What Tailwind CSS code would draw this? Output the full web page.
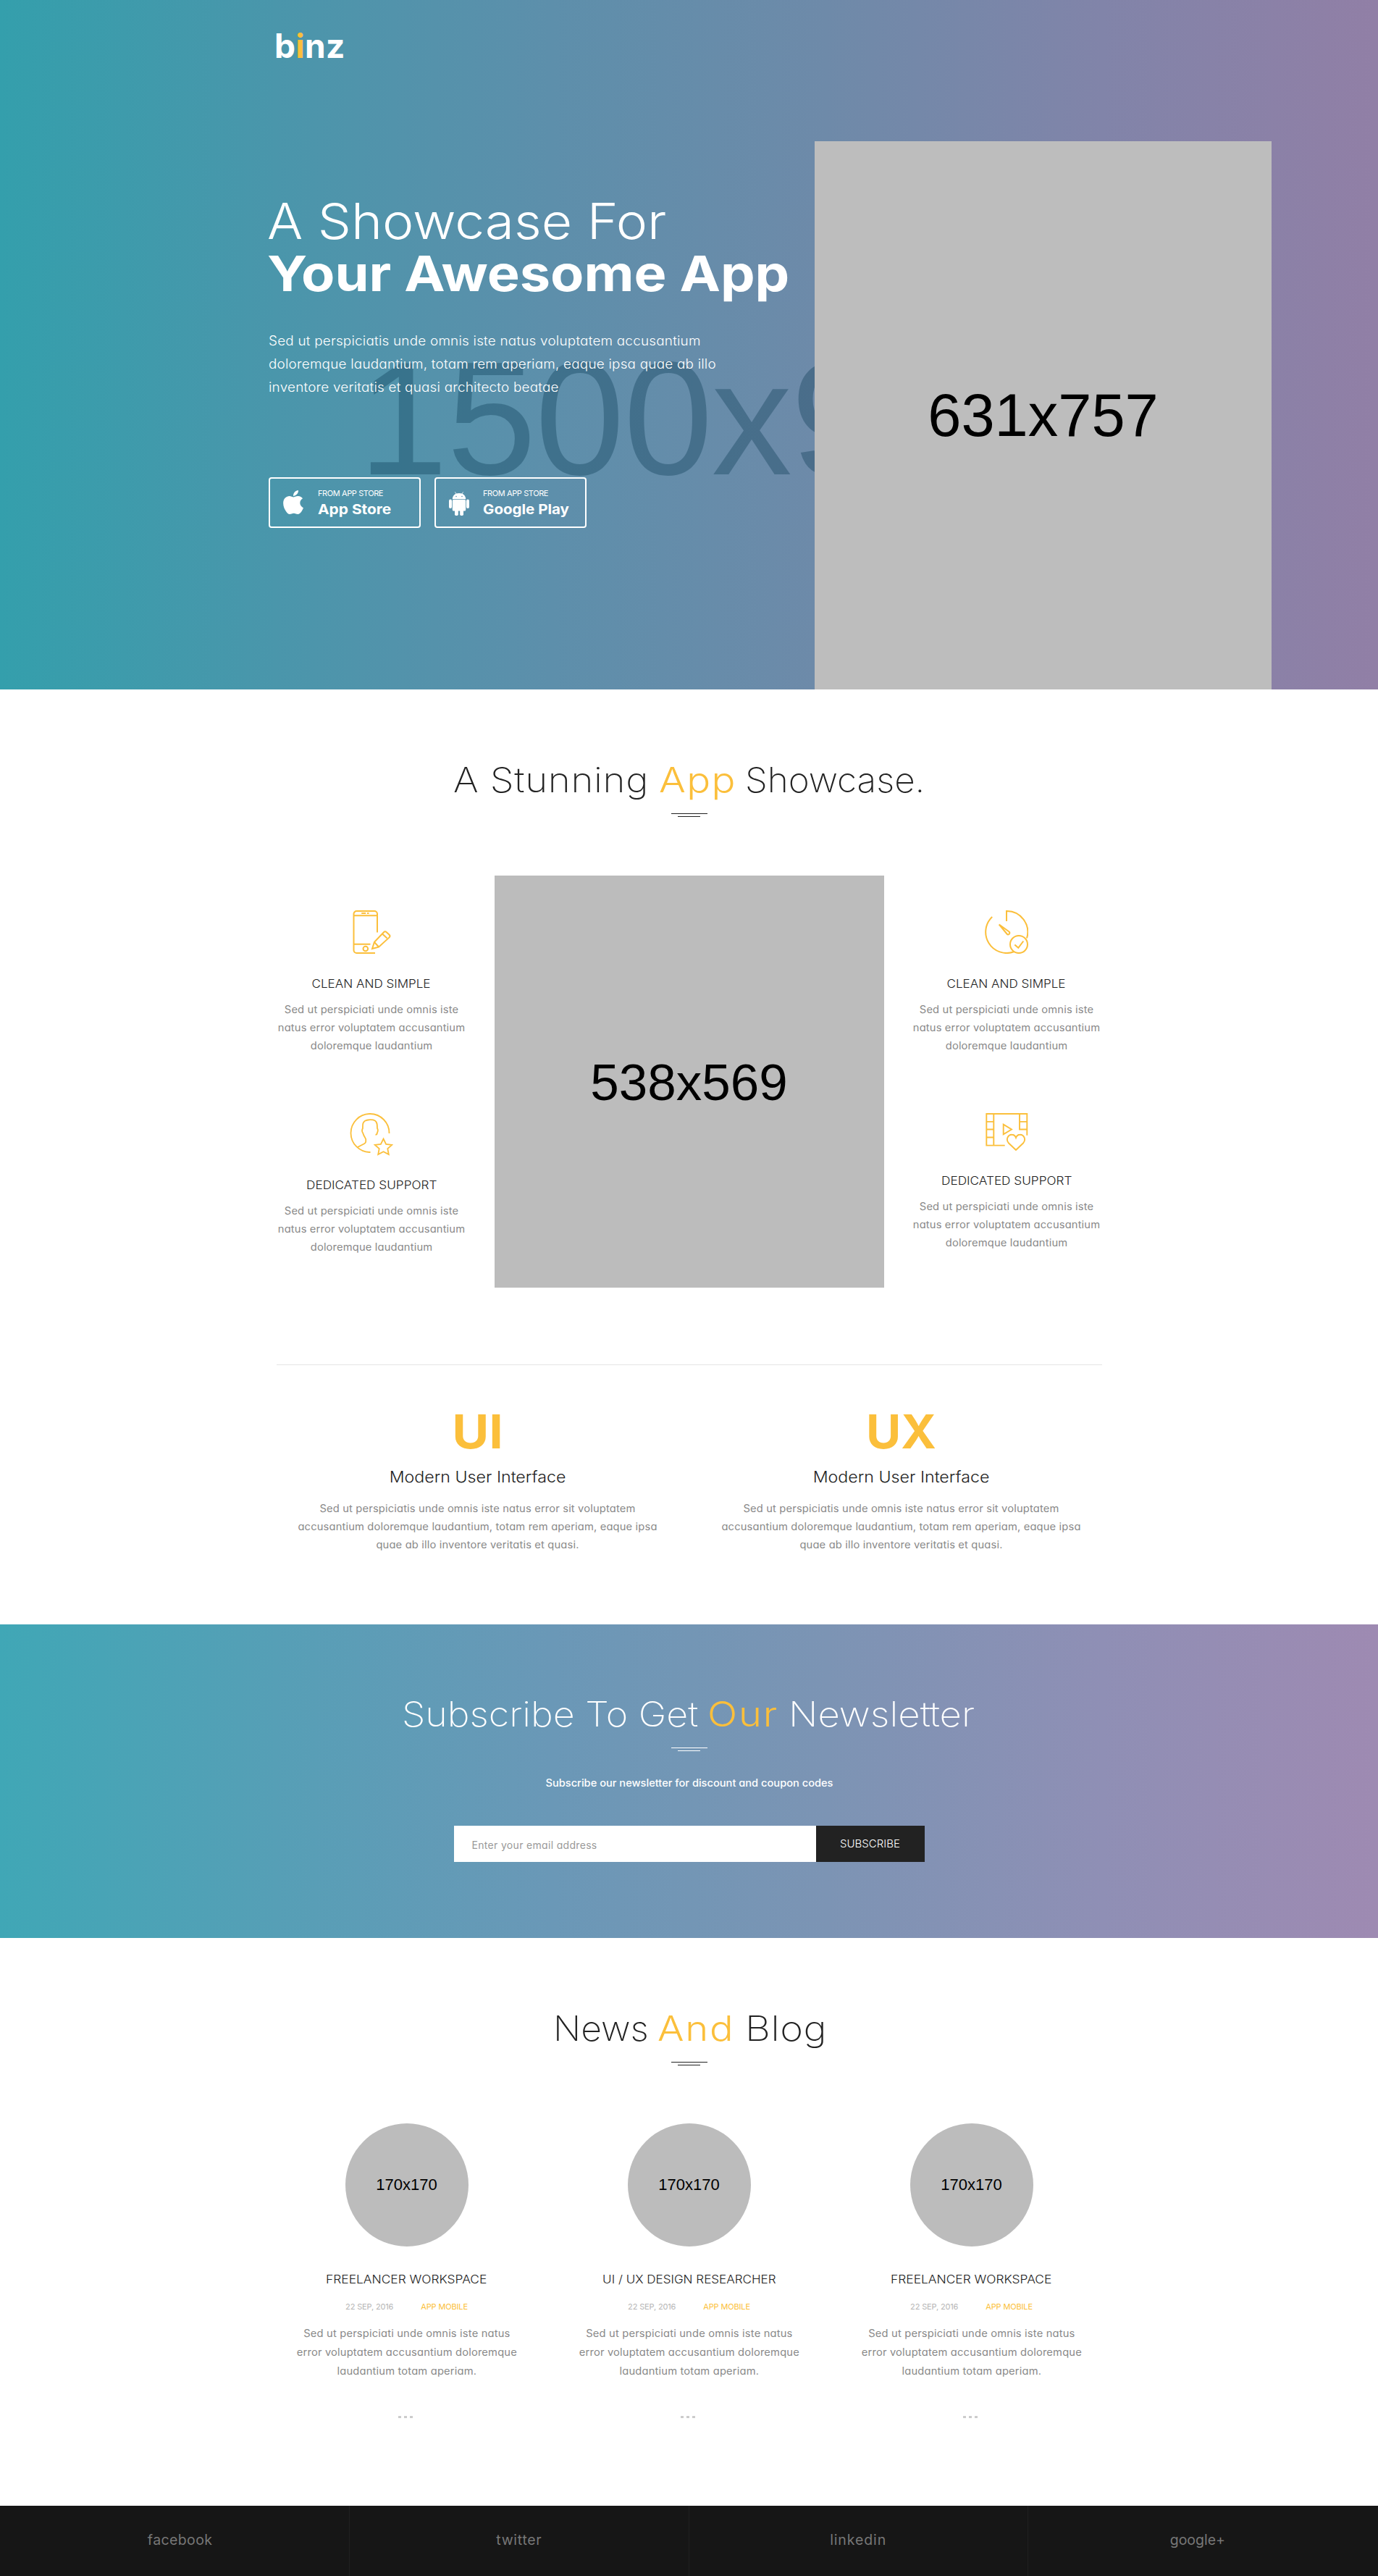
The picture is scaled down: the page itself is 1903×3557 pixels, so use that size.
<!DOCTYPE html>
<html lang="en">
<head>
<meta charset="utf-8">
<title>binz</title>
<script src="https://cdn.jsdelivr.net/npm/@tailwindcss/browser@4"></script>
</head>
<body class="bg-white font-['Inter',sans-serif] text-[#222] overflow-x-hidden">

<!-- Hero -->
<section class="relative flex h-[952px] overflow-hidden pl-[372px] bg-[linear-gradient(90deg,#349fac_0%,#4a96ab_20%,#5d8fab_40%,#6e8aa9_60%,#8184a9_80%,#917fa6_100%)]">
  <div class="absolute left-[495px] top-[466px] text-[222px] leading-[224px] tracking-[-1.5px] whitespace-nowrap font-['Liberation_Sans',sans-serif] text-[rgba(0,50,75,0.32)]">1500x900</div>
  <div class="relative w-[753px] shrink-0 text-white">
    <div class="mt-10 ml-[7px] text-[46px] leading-[46px] font-bold tracking-[0.3px]">b<span class="text-[#fbbf3b]">i</span>nz</div>
    <h1 class="mt-[183px] -ml-[3px] text-[68px] leading-[72px] whitespace-nowrap"><span class="block w-fit origin-left scale-x-[1.075] font-light">A Showcase For</span><span class="block w-fit origin-left scale-x-[1.112] font-bold">Your Awesome App</span></h1>
    <p class="mt-[42px] -ml-px w-fit origin-left scale-x-[1.05] text-[18px] leading-8 font-light tracking-[0.2px] whitespace-nowrap [font-feature-settings:'cv11']">Sed ut perspiciatis unde omnis iste natus voluptatem accusantium<br>doloremque laudantium, totam rem aperiam, eaque ipsa quae ab illo<br>inventore veritatis et quasi architecto beatae</p>
    <div class="mt-[108px] -ml-px flex gap-[19px]">
      <a class="flex h-[70px] w-[210px] items-center rounded-[4px] border-2 border-white pl-[18px]">
        <svg class="h-[33px] w-7 -mt-px" viewBox="4 32 376 448" fill="currentColor"><path d="M318.7 268.7c-.2-36.7 16.4-64.4 50-84.8-18.8-26.9-47.2-41.7-84.7-44.6-35.5-2.8-74.3 20.7-88.5 20.7-15 0-49.4-19.7-76.4-19.7C63.3 141.2 4 184.8 4 273.5q0 39.3 14.4 81.2c12.8 36.7 59 126.7 107.2 125.2 25.2-.6 43-17.9 75.8-17.9 31.8 0 48.3 17.9 76.4 17.9 48.6-.7 90.4-82.5 102.6-119.3-65.2-30.7-61.7-90-61.7-91.9zm-56.6-164.2c27.3-32.4 24.8-61.9 24-72.5-24.1 1.4-52 16.4-67.9 34.9-17.5 19.8-27.8 44.3-25.6 71.9 26.1 2 49.9-11.4 69.5-34.3z"/></svg>
        <span class="ml-5 whitespace-nowrap"><span class="mt-px block text-[11px] leading-4 tracking-[-0.4px]">FROM APP STORE</span><span class="mt-[3px] block w-fit origin-left scale-x-[1.1] text-[19px] leading-6 font-bold">App Store</span></span>
      </a>
      <a class="flex h-[70px] w-[210px] items-center rounded-[4px] border-2 border-white pl-[18px]">
        <svg class="h-[33px] w-7 mt-[3px]" viewBox="0 0 28 33" fill="currentColor"><path d="M4.8 10.2C4.8 5.500 8.500 2 14 2s9.200 3.500 9.200 8.200z"/><path d="M8.300.3l2 3M19.700.3l-2 3" stroke="currentColor" stroke-width=".8"/><rect x="4.800" y="11" width="18.400" height="15.500" rx="1.500"/><rect x="0" y="10.500" width="4" height="12.500" rx="2"/><rect x="24" y="10.500" width="4" height="12.500" rx="2"/><rect x="8" y="24" width="4.800" height="9" rx="1.800"/><rect x="15.200" y="24" width="4.800" height="9" rx="1.800"/><circle cx="10" cy="6.500" r=".8" fill="#5a91ab"/><circle cx="18" cy="6.500" r=".8" fill="#5a91ab"/></svg>
        <span class="ml-[19px] whitespace-nowrap"><span class="mt-px block text-[11px] leading-4 tracking-[-0.4px]">FROM APP STORE</span><span class="mt-[3px] block w-fit origin-left scale-x-[1.08] text-[19px] leading-6 font-bold">Google Play</span></span>
      </a>
    </div>
  </div>
  <div class="relative mt-[195px] flex h-[757px] w-[631px] shrink-0 justify-center bg-[#bdbdbd] pt-[337px] font-['Liberation_Sans',sans-serif] text-[83px] leading-[84px] text-black">631x757</div>
</section>

<!-- Features -->
<section class="flex h-[1291px] flex-col items-center pt-[101px]">
  <h2 class="flex w-[651px] whitespace-nowrap text-[48px] leading-[48px] font-extralight"><span class="w-[284px] origin-left scale-x-[1.1] tracking-[0.6px]">A Stunning</span><span class="w-[119px] origin-left scale-x-[1.14] font-[330] tracking-[1.2px] text-[#fbbf3b]">App</span><span class="w-[248px] origin-left scale-x-[1.03]">Showcase.</span></h2>
  <div class="mt-[22px] h-px w-[50px] bg-[#222]"></div>
  <div class="mt-[3px] h-px w-[31px] bg-[#222]"></div>
  <div class="mt-[81px] flex w-[1140px] text-center">
    <div class="ml-px flex w-[261px] flex-col items-center pt-12">
      <svg class="size-[60px]" viewBox="0 0 60 60" fill="none" stroke="#fbbf3b" stroke-width="2"><path d="M38 30.500V5a4 4 0 0 0-4-4H9.500a4 4 0 0 0-4 4v50a4 4 0 0 0 4 4H35M5.500 7.300H38M5.500 46.800h23"/><path d="M16.200 4h6M24 4h2.500" stroke-width="2.200"/><circle cx="21.800" cy="53" r="3.300"/><path d="M31 53l3-9.300L47 30.200q1.800-1.800 3.800 0l3.800 3.500q1.800 1.800 0 3.700L40 50.700zM45 32.500l6.500 6M34 44l6 6.500"/></svg>
      <h3 class="mt-8 scale-x-[1.1] text-[15.5px] leading-5 font-[350]">CLEAN AND SIMPLE</h3>
      <p class="mt-3 scale-x-[1.05] whitespace-nowrap text-[14px] leading-[25px] tracking-[0.15px] text-[#888] [font-feature-settings:'cv11']">Sed ut perspiciati unde omnis iste<br>natus error voluptatem accusantium<br>doloremque laudantium</p>
      <svg class="mt-[81px] size-[60px]" viewBox="0 0 60 60" fill="none" stroke="#fbbf3b" stroke-width="1.800"><path d="M54.500 28A26.500 26.500 0 1 0 28.500 54"/><path d="M10.500 47.300l10-5.300q2-1.200 1.700-3.500v-2.500c-1-2.500-3-4.500-4-8.500-1.200-1.500-1.300-4.500-.3-6.500 0-5-.2-8 3-10.200C25 8.700 32 8.700 35 10.500c3 2 3 5.500 3 10.500 1.300 2 .6 5-.2 6.500 0 1.500-.6 2.300-2.300 2.300"/><path d="M46.500 35.500l3.600 7.400 8.200 1-6 5.300 1.500 7.800-7.300-3.700-7.300 3.700 1.500-7.800-6-5.300 8.200-1z"/></svg>
      <h3 class="mt-[30px] scale-x-[1.11] text-[15.5px] leading-5 font-[350]">DEDICATED SUPPORT</h3>
      <p class="mt-3 scale-x-[1.05] whitespace-nowrap text-[14px] leading-[25px] tracking-[0.15px] text-[#888] [font-feature-settings:'cv11']">Sed ut perspiciati unde omnis iste<br>natus error voluptatem accusantium<br>doloremque laudantium</p>
    </div>
    <div class="ml-[39px] flex h-[569px] w-[538px] justify-center bg-[#bcbcbc] pt-[250px] font-['Liberation_Sans',sans-serif] text-[71px] leading-[72px] text-black">538x569</div>
    <div class="ml-[39px] flex w-[261px] flex-col items-center pt-12">
      <svg class="size-[60px]" viewBox="0 0 60 60" fill="none" stroke="#fbbf3b" stroke-width="2"><path d="M30 15V1a29 29 0 0 1 28 37.500M40 57.300A29 29 0 0 1 10.200 9"/><path d="M19.700 19.500l13.800 10q1.600 1.500.2 3.200-1.700 1.500-3.200-.2z"/><circle cx="47" cy="47" r="12"/><path d="M41.300 47.400l5 4.400 7-9.300"/></svg>
      <h3 class="mt-8 scale-x-[1.1] text-[15.5px] leading-5 font-[350]">CLEAN AND SIMPLE</h3>
      <p class="mt-3 scale-x-[1.05] whitespace-nowrap text-[14px] leading-[25px] tracking-[0.15px] text-[#888] [font-feature-settings:'cv11']">Sed ut perspiciati unde omnis iste<br>natus error voluptatem accusantium<br>doloremque laudantium</p>
      <svg class="mt-[81px] h-[52px] w-[60px]" viewBox="0 0 60 52" fill="none" stroke="#fbbf3b" stroke-width="1.900"><path d="M27.700 44.600H2.300V1h56v29.800M12.300 1v43.600M2.300 11.900h10M2.300 22.500h10M2.300 33.500h10M48 1v21.500h10.300M48 11.900h10.300M25.700 15.600l11.300 6.900-11.300 6.900z"/><path d="M43 51L33 41.500c-4.500-5-1-12 4.500-11.800 2.500 0 4.500 1.600 5.500 4.300 1-2.700 3-4.300 5.500-4.300 5.500-.2 9 6.800 4.500 11.800z"/></svg>
      <h3 class="mt-8 scale-x-[1.11] text-[15.5px] leading-5 font-[350]">DEDICATED SUPPORT</h3>
      <p class="mt-3 scale-x-[1.05] whitespace-nowrap text-[14px] leading-[25px] tracking-[0.15px] text-[#888] [font-feature-settings:'cv11']">Sed ut perspiciati unde omnis iste<br>natus error voluptatem accusantium<br>doloremque laudantium</p>
    </div>
  </div>
  <div class="mt-[106px] h-px w-[1140px] bg-[#e5e5e5]"></div>
  <div class="mt-[60px] grid w-[1170px] grid-cols-2 text-center">
    <div>
      <div class="scale-x-[1.09] text-[64px] leading-[64px] font-bold text-[#fbbf3b]">UI</div>
      <h3 class="mt-4 scale-x-[1.055] text-[22px] leading-7 font-[350]">Modern User Interface</h3>
      <p class="mt-[17px] scale-x-[1.05] text-[14px] leading-[25px] tracking-[0.15px] whitespace-nowrap text-[#888] [font-feature-settings:'cv11']">Sed ut perspiciatis unde omnis iste natus error sit voluptatem<br>accusantium doloremque laudantium, totam rem aperiam, eaque ipsa<br>quae ab illo inventore veritatis et quasi.</p>
    </div>
    <div>
      <div class="scale-x-[1.03] text-[64px] leading-[64px] font-bold text-[#fbbf3b]">UX</div>
      <h3 class="mt-4 scale-x-[1.055] text-[22px] leading-7 font-[350]">Modern User Interface</h3>
      <p class="mt-[17px] scale-x-[1.05] text-[14px] leading-[25px] tracking-[0.15px] whitespace-nowrap text-[#888] [font-feature-settings:'cv11']">Sed ut perspiciatis unde omnis iste natus error sit voluptatem<br>accusantium doloremque laudantium, totam rem aperiam, eaque ipsa<br>quae ab illo inventore veritatis et quasi.</p>
    </div>
  </div>
</section>

<!-- Newsletter -->
<section class="flex h-[433px] flex-col items-center pt-[100px] text-white bg-[linear-gradient(90deg,#40a7b6_0%,#569fb6_20%,#6a98b7_40%,#7396b5_50%,#7c94b4_60%,#8f8fb5_80%,#9e8ab2_100%)]">
  <h2 class="flex w-[793px] whitespace-nowrap text-[48px] leading-[48px] font-extralight"><span class="w-[422px] origin-left scale-x-[1.083]">Subscribe To Get</span><span class="w-[112px] origin-left scale-x-[1.13] font-[330] tracking-[1.6px] text-[#fbbf3b]">Our</span><span class="w-[259px] origin-left scale-x-[1.1]">Newsletter</span></h2>
  <div class="mt-[22px] h-px w-[50px] bg-white"></div>
  <div class="mt-[3px] h-px w-[31px] bg-white"></div>
  <p class="mt-[31px] scale-x-[1.045] text-[14px] leading-[25px] font-medium [font-feature-settings:'cv11']">Subscribe our newsletter for discount and coupon codes</p>
  <form class="mt-[47px] flex h-[50px]">
    <input type="email" placeholder="Enter your email address" class="w-[500px] bg-white px-[25px] pt-0.5 text-[14px] tracking-[0.32px] placeholder:text-[#999] [font-feature-settings:'cv11']">
    <button type="button" class="w-[150px] bg-[#222] text-[15px] leading-5 font-[350]">SUBSCRIBE</button>
  </form>
</section>

<!-- Blog -->
<section class="flex h-[784px] flex-col items-center pt-[101px]">
  <h2 class="flex w-[376px] whitespace-nowrap text-[48px] leading-[48px] font-extralight"><span class="w-[144px] origin-left scale-x-[1.04]">News</span><span class="w-[121px] origin-left scale-x-[1.13] font-[330] tracking-[1.6px] text-[#fbbf3b]">And</span><span class="w-[111px] origin-left scale-x-[1.13] tracking-[0.5px]">Blog</span></h2>
  <div class="mt-[22px] h-px w-[50px] bg-[#222]"></div>
  <div class="mt-[3px] h-px w-[31px] bg-[#222]"></div>
  <div class="mt-20 grid w-[1170px] grid-cols-3 text-center" id="posts"></div>
</section>

<!-- Footer -->
<footer class="grid h-[97px] grid-cols-4 bg-[#161616] px-[15px] text-center text-[19.5px] leading-7 text-[#777]">
  <a class="border-r border-[#202020] pt-[33px] tracking-[0.4px]">facebook</a>
  <a class="border-r border-[#202020] pt-[33px] tracking-[0.7px]">twitter</a>
  <a class="border-r border-[#202020] pt-[33px] tracking-[0.9px]">linkedin</a>
  <a class="pt-[33px]">google+</a>
</footer>

<script>
  const posts = [
    ['FREELANCER WORKSPACE', 'scale-x-[1.12]'],
    ['UI / UX DESIGN RESEARCHER', 'scale-x-[1.1]'],
    ['FREELANCER WORKSPACE', 'scale-x-[1.12]'],
  ];
  document.getElementById('posts').innerHTML = posts.map(([title, stretch]) => `
    <article class="flex flex-col items-center">
      <div class="size-[170px] rounded-full bg-[#bcbcbc] font-['Liberation_Sans',sans-serif] text-[22px] leading-[170px] text-black">170x170</div>
      <h3 class="mt-9 text-[15.5px] leading-5 font-[350] ${stretch}">${title}</h3>
      <div class="mt-[19px] flex gap-[38px] text-[11px] leading-4 tracking-[-0.15px]"><span class="text-[#b5b5b5]">22 SEP, 2016</span><span class="text-[#fbbf3b]">APP MOBILE</span></div>
      <p class="mt-4 scale-x-[1.05] text-[14px] leading-[26px] tracking-[0.17px] whitespace-nowrap text-[#888] [font-feature-settings:'cv11']">Sed ut perspiciati unde omnis iste natus<br>error voluptatem accusantium doloremque<br>laudantium totam aperiam.</p>
      <div class="mt-[49px] mr-1 flex gap-1"><i class="h-[3px] w-1 bg-[#ccc]"></i><i class="h-[3px] w-1 bg-[#ccc]"></i><i class="h-[3px] w-1 bg-[#ccc]"></i></div>
    </article>`).join('');
</script>
</body>
</html>
